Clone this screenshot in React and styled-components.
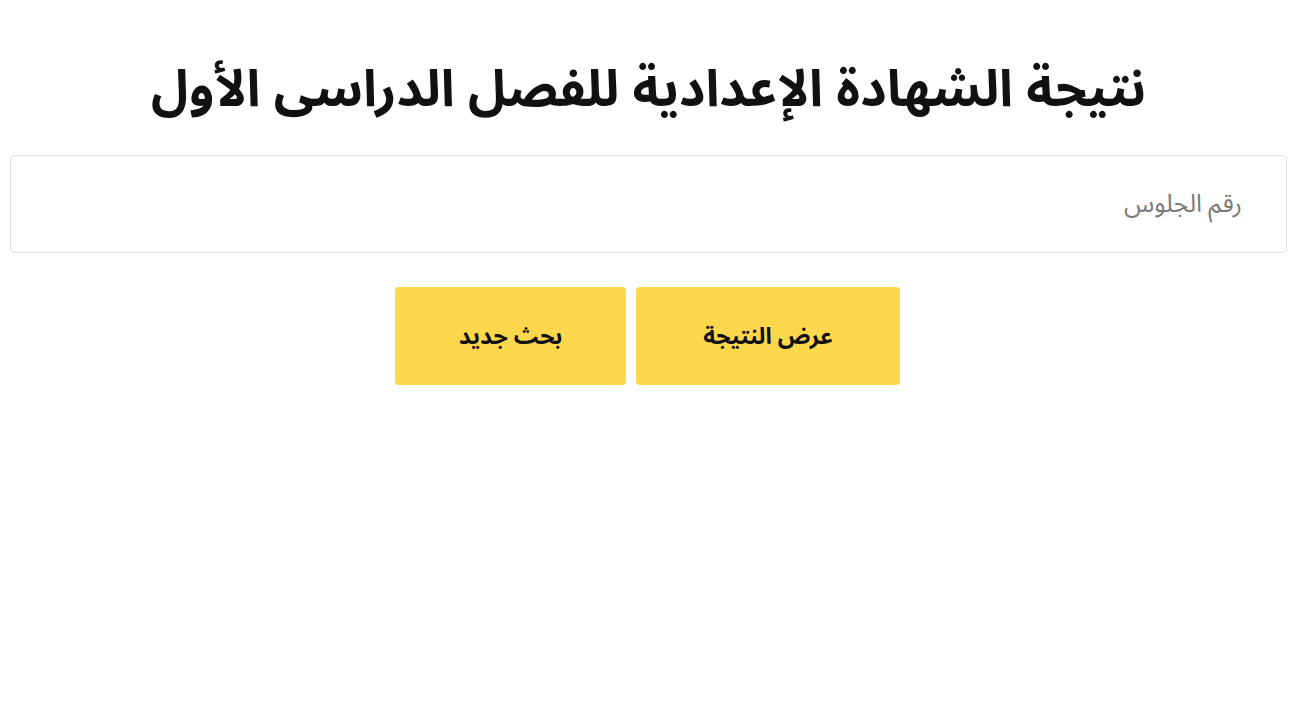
import React from "react";
import styled, { createGlobalStyle } from "styled-components";

const Global = createGlobalStyle`
  html, body { margin: 0; padding: 0; background: #fff; }
  body { font-family: "Noto Sans Arabic", "Noto Sans", "DejaVu Sans", sans-serif; }
  * { box-sizing: border-box; }
`;

const Page = styled.div`
  direction: rtl;
  padding: 52px 11px 0 10px;
  display: flex;
  flex-direction: column;
  align-items: stretch;
`;

const Title = styled.h1`
  margin: 0;
  text-align: center;
  font-size: 51px;
  font-weight: 700;
  color: #111;
  line-height: 76px;
`;

const Field = styled.input`
  margin-top: 27px;
  height: 98px;
  border: 1px solid #dcdcdc;
  border-radius: 5px;
  padding: 0 44px;
  font-family: inherit;
  font-size: 25px;
  color: #333;
  direction: rtl;
  outline: none;
  &::placeholder { color: #7a7a7a; }
`;

const Actions = styled.div`
  margin-top: 34px;
  display: flex;
  justify-content: center;
  gap: 10px;
  padding-left: 0;
  padding-right: 2px;
`;

const Button = styled.button`
  width: ${(p) => p.$w}px;
  height: 98px;
  border: none;
  border-radius: 4px;
  background: #fed74c;
  color: #111;
  font-family: inherit;
  font-size: 23px;
  font-weight: 700;
  cursor: pointer;
`;

export default function App() {
  return (
    <>
      <Global />
      <Page>
        <Title>نتيجة الشهادة الإعدادية للفصل الدراسى الأول</Title>
        <Field placeholder="رقم الجلوس" />
        <Actions>
          <Button $w={264}>عرض النتيجة</Button>
          <Button $w={231}>بحث جديد</Button>
        </Actions>
      </Page>
    </>
  );
}
